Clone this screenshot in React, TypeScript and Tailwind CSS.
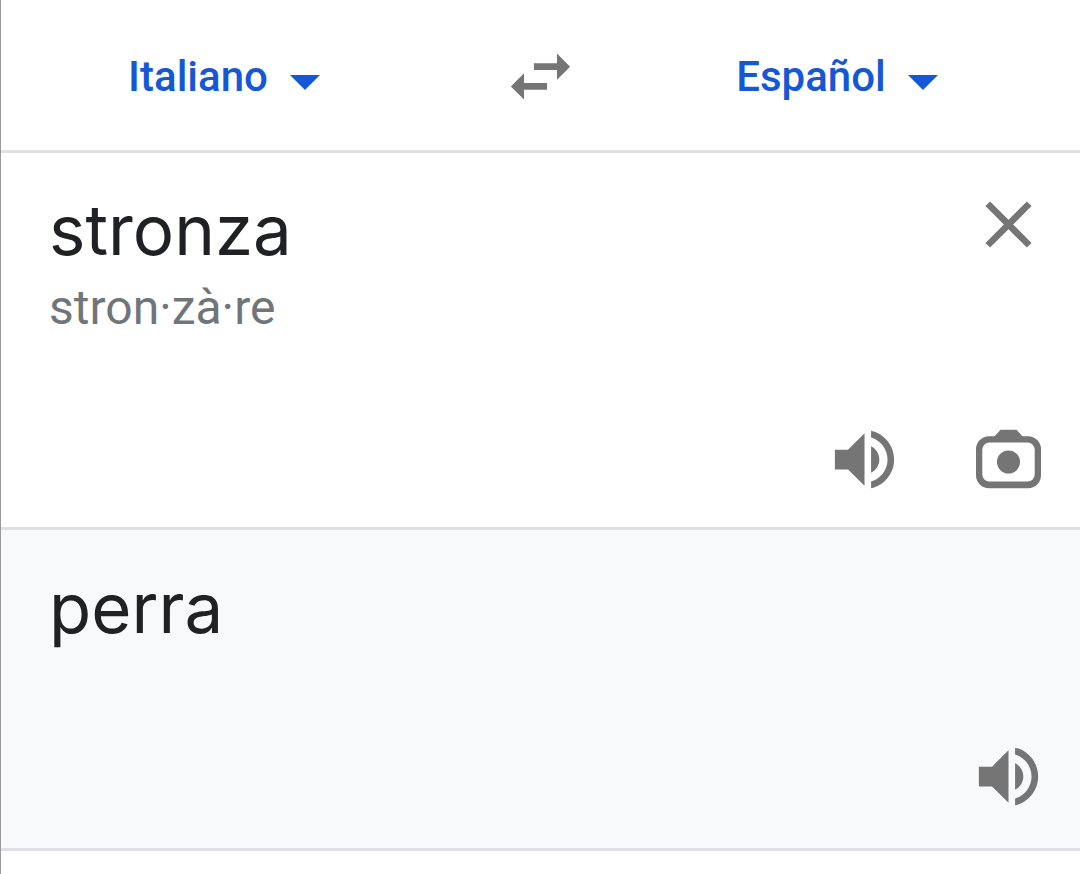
import { useState } from "react";

const ICON = "size-[79px] fill-[#757575]";

function SwapIcon() {
  return (
    <svg viewBox="0 0 24 24" className={ICON} aria-hidden="true">
      <path d="M6.99 11L3 15l3.99 4v-3H14v-2H6.99v-3zM21 9l-3.99-4v3H10v2h7.01v3L21 9z" />
    </svg>
  );
}

function CloseIcon() {
  return (
    <svg viewBox="0 0 24 24" className={ICON} aria-hidden="true">
      <path d="M19 6.41L17.59 5 12 10.59 6.41 5 5 6.41 10.59 12 5 17.59 6.41 19 12 13.41 17.59 19 19 17.59 13.41 12z" />
    </svg>
  );
}

function SpeakerIcon() {
  return (
    <svg viewBox="0 0 24 24" className={ICON} aria-hidden="true">
      <path d="M3 9v6h4l5 5V4L7 9H3zm13.5 3c0-1.77-1.02-3.29-2.5-4.03v8.05c1.48-.73 2.5-2.25 2.5-4.02zM14 3.23v2.06c2.89.86 5 3.54 5 6.71s-2.11 5.85-5 6.71v2.06c4.01-.91 7-4.49 7-8.77s-2.99-7.86-7-8.77z" />
    </svg>
  );
}

function CameraIcon() {
  return (
    <svg viewBox="0 0 79 79" className={ICON} aria-hidden="true">
      <path d="M25 17l6.5-7.3h16L54 17z" />
      <path
        fillRule="evenodd"
        d="M20 16.2h39a13 13 0 0 1 13 13v26a13 13 0 0 1-13 13H20a13 13 0 0 1-13-13v-26a13 13 0 0 1 13-13zm.3 6.4a7 7 0 0 0-7 7v25a7 7 0 0 0 7 7h38.4a7 7 0 0 0 7-7v-25a7 7 0 0 0-7-7z"
      />
      <circle cx="39.5" cy="42" r="11.5" />
    </svg>
  );
}

function LanguageSelect({ label, initial, options }: { label: string; initial: string; options: string[] }) {
  const [value, setValue] = useState(initial);
  return (
    <label className="flex items-center gap-[22px] text-[#1558d6]">
      <select
        aria-label={label}
        value={value}
        onChange={(e) => setValue(e.target.value)}
        className="appearance-none [field-sizing:content] bg-transparent text-[42px] leading-[56px] font-medium outline-none"
      >
        {options.map((o) => (
          <option key={o}>{o}</option>
        ))}
      </select>
      <svg viewBox="0 0 30 15" className="mt-3 h-[15px] w-[30px] fill-current" aria-hidden="true">
        <path d="M0 0h30L15 15z" />
      </svg>
    </label>
  );
}

export default function App() {
  const [text, setText] = useState("stronza");
  return (
    <main className="min-h-screen border-l border-[#999999] bg-white font-['Roboto',sans-serif]">
      <header className="grid grid-cols-[1fr_auto_1fr] items-center border-b-3 border-[#e0e0e0] pt-[37px] pb-[34px]">
        <div className="flex justify-center pr-[54px]">
          <LanguageSelect label="Idioma de origen" initial="Italiano" options={["Italiano", "Español"]} />
        </div>
        <button type="button" aria-label="Intercambiar idiomas">
          <SwapIcon />
        </button>
        <div className="flex justify-center pl-[14px]">
          <LanguageSelect label="Idioma de destino" initial="Español" options={["Español", "Italiano"]} />
        </div>
      </header>

      <section className="border-b-3 border-[#dfe0e4] pt-8 pr-8 pb-7 pl-12">
        <div className="flex items-start">
          <div className="flex min-w-0 flex-1 flex-col gap-[10px] pt-[5px]">
            <textarea
              aria-label="Texto de origen"
              rows={1}
              value={text}
              onChange={(e) => setText(e.target.value)}
              className="block w-full resize-none overflow-hidden font-['Inter',sans-serif] text-[69px] leading-[80px] text-[#202124] outline-none"
            />
            <p className="text-[48px] leading-[56px] text-[#70757a]">stron·zà·re</p>
          </div>
          <button type="button" aria-label="Borrar texto">
            <CloseIcon />
          </button>
        </div>
        <div className="mt-[84px] flex justify-end gap-[65px]">
          <button type="button" aria-label="Escuchar el original">
            <SpeakerIcon />
          </button>
          <button type="button" aria-label="Traducir con la cámara">
            <CameraIcon />
          </button>
        </div>
      </section>

      <section className="border-b-3 border-[#dfe0e4] bg-[#f8f9fb] pt-[38px] pr-8 pb-8 pl-12">
        <p className="font-['Inter',sans-serif] text-[69px] leading-[80px] text-[#202124]">perra</p>
        <div className="mt-[89px] flex justify-end">
          <button type="button" aria-label="Escuchar la traducción">
            <SpeakerIcon />
          </button>
        </div>
      </section>
    </main>
  );
}
